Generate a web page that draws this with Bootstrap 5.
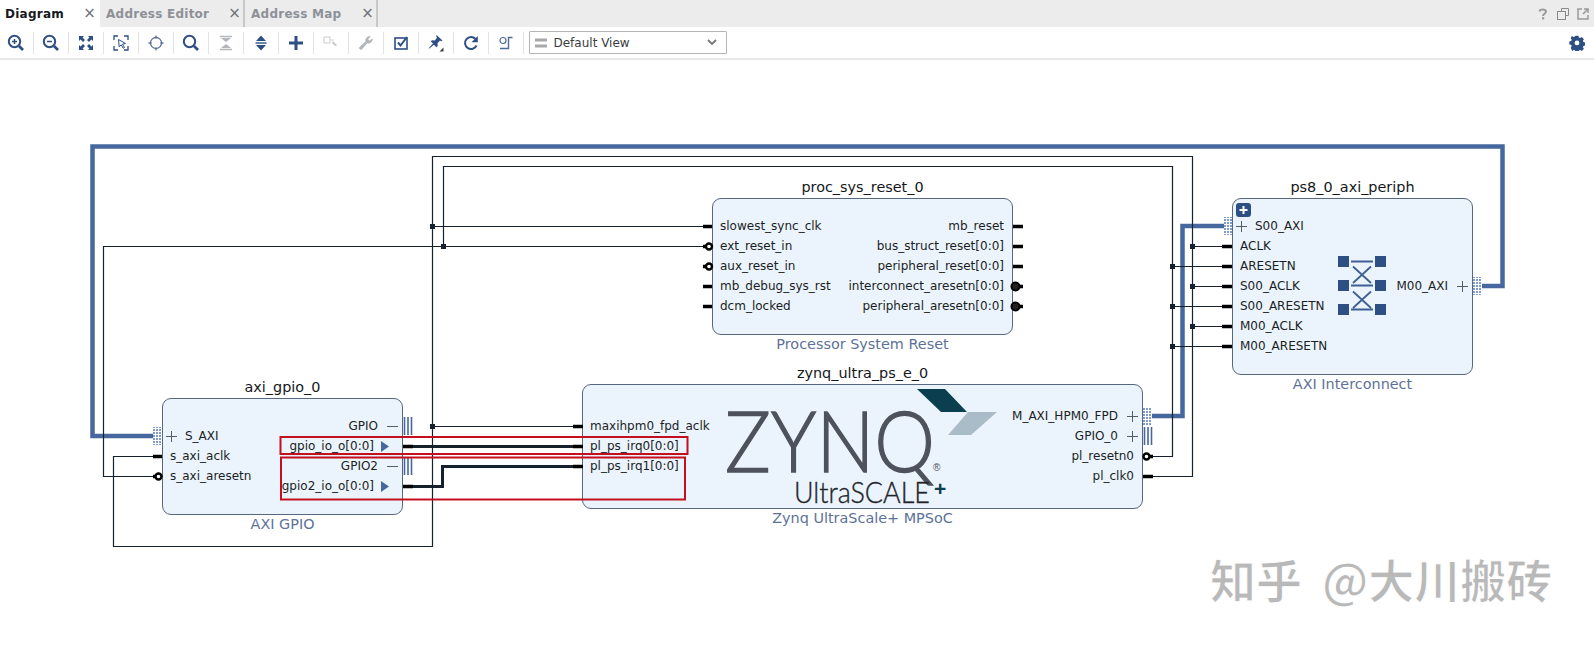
<!DOCTYPE html>
<html lang="en">
<head>
<meta charset="utf-8">
<title>Diagram</title>
<link rel="stylesheet" href="https://cdn.jsdelivr.net/npm/bootstrap@5.3.0/dist/css/bootstrap.min.css">
<style>
html,body{height:100%;overflow:hidden;background:#fff}
body{font-family:"DejaVu Sans",sans-serif;font-size:12px;color:#16181c}
.tabbar{height:27px;background:#ececec;flex-wrap:nowrap}
.tabbar .tab-item{height:27px;display:flex;align-items:center;font-weight:700;font-size:12px;color:#8d9197;letter-spacing:.25px;border-right:2px solid #c8c8c8;padding:0}
.tabbar .tab-item.is-on{background:#fff;color:#17191d;border-right:0;width:100px;padding-left:5px}
.tab-ed{width:145px;padding-left:6px!important}
.tab-map{width:133px;padding-left:6px!important}
.tab-x{margin-left:auto;margin-right:2px;font-weight:400;font-size:15px;color:#6c7076;line-height:1}
.is-on .tab-x{margin-right:4px}
.winbtns{gap:8px;padding-right:5px}
.toolbar{height:33px;background:#fff;border-bottom:2px solid #e9e9e9}
.tb{width:34px;height:24px;padding:0;border:0;border-radius:0;display:flex;align-items:center;justify-content:center;flex:none}
.tb:first-child{margin-left:-1.5px}
.tb-sep{width:1px;height:22px;background:#e2e2e2;flex:none}
.viewsel{width:198px;height:23px;margin-left:5px;border:1px solid #b5b5b5;border-radius:1px;font-size:12px;color:#3a3c41;padding:0 9px 0 5px;background:#fff}
.vs-ico{margin-right:7px}
.canvas{height:587px;position:relative}
.wires{position:absolute;left:0;top:0;z-index:2;pointer-events:none}
.node{position:absolute;z-index:1}
.node-t{height:20px;line-height:20px;margin-bottom:1px;text-align:center;font-size:14.4px;color:#15171a;white-space:nowrap}
.node-s{height:19px;line-height:18px;text-align:center;font-size:14.4px;color:#5d7298;white-space:nowrap}
.node-b{background:#ebf4fd;border:1px solid #56687f;border-radius:9px;white-space:nowrap;font-size:12px;color:#1b1e23}
.pin{height:20px;line-height:20px}
.pin-l{padding-left:7px}
.pin-lb{padding-left:22px}
.pin-r{padding-right:8px;text-align:right}
.pin-rb{padding-right:24px;text-align:right}
.pin-rt{padding-right:28px;text-align:right}
.n-proc{left:712px;top:117px;width:301px}
.n-proc .node-b{height:137px}
.n-gpio{left:162px;top:317px;width:241px}
.n-gpio .node-b{height:117px}
.n-zynq{left:582px;top:303px;width:561px}
.n-zynq .node-b{height:125px}
.n-ps8{left:1232px;top:117px;width:241px}
.n-ps8 .node-b{height:177px}
.col-18{padding-top:17px}
.col-22{padding-top:21px}
.col-28{padding-top:27px}
.col-32{padding-top:31px}
.col-78{padding-top:77px}
.w{fill:none;stroke:#15222e;stroke-width:1.2}
.wt{fill:none;stroke:#15222e;stroke-width:3}
.wb{fill:none;stroke:#47689f;stroke-width:4.5}
.red{fill:none;stroke:#c40f1f;stroke-width:2}
.stub{stroke:#000;stroke-width:3.5}
.inv{fill:#fff;stroke:#000;stroke-width:2.4}
.invf{fill:#222;stroke:#000;stroke-width:2}
.plus{stroke:#555d68;stroke-width:1;fill:none}
.bars{stroke:#47689f;stroke-width:1.6}
.logo1{font-family:"Lato","Liberation Sans",sans-serif;font-weight:300;font-size:84px;fill:#4e525c;stroke:#4e525c;stroke-width:1.3}
.logo2{font-family:"Lato","Liberation Sans",sans-serif;font-weight:300;font-size:29px;fill:#23252a;stroke:#23252a;stroke-width:.35}
.logo3{font-family:"Liberation Sans",sans-serif;font-size:10px;fill:#4e525c}
.logo4{font-family:"Liberation Sans",sans-serif;font-size:21px;font-weight:700;fill:#0b3f50}
.mark-wm{font-family:"Noto Sans CJK SC",sans-serif;font-size:46px;font-weight:700;fill:#b9b9b9;stroke:#fff;stroke-width:1}
.nv{stroke:#2e4f84;fill:none}
.nvf{fill:#2e4f84}
.gr{stroke:#b3b6ba;fill:none}
.grf{fill:#b3b6ba}
</style>
</head>
<body>
<div class="d-flex flex-column vh-100">
  <div class="d-flex tabbar justify-content-between">
    <ul class="nav flex-nowrap">
      <li class="tab-item is-on">Diagram<span class="tab-x">×</span></li>
      <li class="tab-item tab-ed">Address Editor<span class="tab-x">×</span></li>
      <li class="tab-item tab-map">Address Map<span class="tab-x">×</span></li>
    </ul>
    <div class="d-flex align-items-center winbtns">
      <svg width="12" height="12" viewBox="0 0 12 12"><path d="M2.5 3.5C3 1 9 .8 9 3.6c0 2.2-3 2.2-3 4.4" fill="none" stroke="#9a9a9a" stroke-width="2"/><rect x="5" y="9.2" width="2.2" height="2.2" fill="#9a9a9a"/></svg>
      <svg width="12" height="12" viewBox="0 0 12 12" fill="none" stroke="#8a8a8a"><path d="M4.5 3.5v-3h7v7h-3"/><rect x=".5" y="3.5" width="8" height="8"/></svg>
      <svg width="12" height="12" viewBox="0 0 12 12" fill="none" stroke="#9a9a9a" stroke-width="1.5"><path d="M5 1H1v10h10V7"/><path d="M7 1h4v4M11 1 6 6"/></svg>
    </div>
  </div>
  <div class="d-flex align-items-center toolbar">
    <button class="btn tb"><svg width="18" height="18" viewBox="0 0 18 18"><circle class="nv" cx="7.5" cy="7.5" r="5.7" stroke-width="2"/><path class="nv" d="M5 7.5h5M7.5 5v5" stroke-width="1.5"/><path class="nv" d="M12 12l4 4" stroke-width="2.6"/></svg></button><span class="tb-sep"></span>
    <button class="btn tb"><svg width="18" height="18" viewBox="0 0 18 18"><circle class="nv" cx="7.5" cy="7.5" r="5.7" stroke-width="2"/><path class="nv" d="M5 7.5h5" stroke-width="1.5"/><path class="nv" d="M12 12l4 4" stroke-width="2.6"/></svg></button><span class="tb-sep"></span>
    <button class="btn tb"><svg width="16" height="16" viewBox="0 0 16 16"><path class="nvf" d="M1 1h5L4.6 2.6 7 5 5 7 2.6 4.6 1 6zM15 1v5l-1.600-1.400L11 7 9 5l2.400-2.400L10 1zM1 15v-5l1.600 1.400L5 9l2 2-2.400 2.400L6 15zM15 15h-5l1.400-1.600L9 11l2-2 2.400 2.400L15 10z"/></svg></button><span class="tb-sep"></span>
    <button class="btn tb"><svg width="16" height="16" viewBox="0 0 16 16"><path class="nv" d="M1 5V1h4M11 1h4v4M15 11v4h-4M5 15H1v-4" stroke-width="1.3"/><path d="M5.500 4.500l7 4-3 .6 2 3.400-1.300.7-2-3.400-2 2z" fill="#fff" stroke="#2e4f84"/></svg></button><span class="tb-sep"></span>
    <button class="btn tb"><svg width="16" height="16" viewBox="0 0 16 16"><circle cx="8" cy="8" r="5.500" fill="none" stroke="#5b7196" stroke-width="1.300"/><path d="M8 .5v3M8 12.500v3M.5 8h3M12.500 8h3" stroke="#5b7196" stroke-width="1.300"/></svg></button><span class="tb-sep"></span>
    <button class="btn tb"><svg width="18" height="18" viewBox="0 0 18 18"><circle class="nv" cx="7.500" cy="7.500" r="5.700" stroke-width="2"/><path class="nv" d="M12 12l4 4" stroke-width="2.600"/></svg></button><span class="tb-sep"></span>
    <button class="btn tb"><svg width="16" height="16" viewBox="0 0 16 16"><path class="gr" d="M2 1.500h12M2 14.500h12" stroke-width="1.400"/><path class="grf" d="M3 3h10L8 7zM3 13h10L8 9z"/></svg></button><span class="tb-sep"></span>
    <button class="btn tb"><svg width="16" height="16" viewBox="0 0 16 16"><path class="nvf" d="M8 .5 13 6H3zM8 15.500 3 10h10z"/><path class="nv" d="M2.500 8h11" stroke-width="1.400"/></svg></button><span class="tb-sep"></span>
    <button class="btn tb"><svg width="16" height="16" viewBox="0 0 16 16"><path class="nv" d="M8 1v14M1 8h14" stroke-width="3"/></svg></button><span class="tb-sep"></span>
    <button class="btn tb"><svg width="16" height="16" viewBox="0 0 16 16"><rect x="1" y="2" width="6" height="6" fill="#fff" stroke="#c9cbce"/><path d="M8 5h3M10 6.500l3.500 3.500-1 1L9.500 8z" fill="#c4c6c9" stroke="#c4c6c9" stroke-width=".7"/></svg></button><span class="tb-sep"></span>
    <button class="btn tb"><svg width="16" height="16" viewBox="0 0 16 16"><path d="M2 14c-.8-.8-.6-1.400 0-2l6-5.500C7.200 4 8.800 1.500 12 1.500l-2.200 2.700 1.800 1.800L14.300 4c0 3-2.700 4.800-5.200 3.900L3.800 14c-.6.600-1.200.6-1.800 0z" fill="#b3b6ba" stroke="#b3b6ba" stroke-width=".9"/></svg></button><span class="tb-sep"></span>
    <button class="btn tb"><svg width="16" height="16" viewBox="0 0 16 16"><rect x="2" y="3" width="12" height="11" fill="none" stroke="#2e4f84" stroke-width="1.600"/><path class="nv" d="M5 7.500l2.500 3L14 2" stroke-width="2"/></svg></button><span class="tb-sep"></span>
    <button class="btn tb"><svg width="18" height="18" viewBox="0 0 18 18"><path class="nvf" d="M9.500 1l6 5.500-1.500.7-1-.6-2.500 2.700.2 2.800-1.300 1.100-2.500-2.500L3 14l-1.500 1 1-1.700L6 9.500 3.800 7.300l1.200-1.100 2.800.2L10 3.800l-.8-1.200z"/><path d="M12.500 17.500l4-4v4z" fill="#3b3f46"/></svg></button><span class="tb-sep"></span>
    <button class="btn tb"><svg width="16" height="16" viewBox="0 0 16 16"><path class="nv" d="M13.500 10.500A6 6 0 1 1 12.500 4" stroke-width="2"/><path class="nvf" d="M14.800.9v6.300H8.500z"/></svg></button><span class="tb-sep"></span>
    <button class="btn tb"><svg width="16" height="16" viewBox="0 0 16 16"><circle cx="5" cy="5.500" r="3" fill="none" stroke="#4f6c99" stroke-width="1.200"/><path d="M14.500 2.500H10.500V13.500H2" fill="none" stroke="#4f6c99" stroke-width="1.400"/></svg></button><span class="tb-sep"></span>
    <div class="d-flex align-items-center viewsel">
      <svg class="vs-ico" width="12" height="10" viewBox="0 0 12 10"><path d="M0 2h12M0 8h12" stroke="#a8a8a8" stroke-width="3"/></svg>
      <span>Default View</span>
      <svg class="ms-auto" width="10" height="7" viewBox="0 0 10 7"><path d="M1 1l4 4 4-4" fill="none" stroke="#777" stroke-width="1.800"/></svg>
    </div>
    <button class="btn tb ms-auto me-0"><svg width="16" height="16" viewBox="0 0 16 16"><path class="nvf" fill-rule="evenodd" d="M6.500 1h3l.4 1.800 1.300.6 1.600-1 2.100 2.100-1 1.600.6 1.300 1.800.4v3l-1.800.4-.6 1.300 1 1.600-2.100 2.100-1.600-1-1.300.6-.4 1.800h-3l-.4-1.800-1.300-.6-1.600 1L1.700 13l1-1.600-.6-1.300L.3 9.700v-3l1.800-.4.600-1.300-1-1.600L2.900 1.300l1.600 1 1.300-.6zM8 5.800a2.400 2.400 0 1 0 0 4.800 2.400 2.400 0 0 0 0-4.800z" transform="translate(0 -.3)"/></svg></button>
  </div>
  <main class="canvas">
    <div class="node n-proc">
      <div class="node-t">proc_sys_reset_0</div>
      <div class="node-b d-flex justify-content-between">
        <div class="col-18">
          <div class="pin pin-l">slowest_sync_clk</div><div class="pin pin-l">ext_reset_in</div><div class="pin pin-l">aux_reset_in</div><div class="pin pin-l">mb_debug_sys_rst</div><div class="pin pin-l">dcm_locked</div>
        </div>
        <div class="col-18">
          <div class="pin pin-r">mb_reset</div><div class="pin pin-r">bus_struct_reset[0:0]</div><div class="pin pin-r">peripheral_reset[0:0]</div><div class="pin pin-r">interconnect_aresetn[0:0]</div><div class="pin pin-r">peripheral_aresetn[0:0]</div>
        </div>
      </div>
      <div class="node-s">Processor System Reset</div>
    </div>
    <div class="node n-gpio">
      <div class="node-t">axi_gpio_0</div>
      <div class="node-b d-flex justify-content-between">
        <div class="col-28">
          <div class="pin pin-lb">S_AXI</div><div class="pin pin-l">s_axi_aclk</div><div class="pin pin-l">s_axi_aresetn</div>
        </div>
        <div class="col-18">
          <div class="pin pin-rb">GPIO</div><div class="pin pin-rt">gpio_io_o[0:0]</div><div class="pin pin-rb">GPIO2</div><div class="pin pin-rt">gpio2_io_o[0:0]</div>
        </div>
      </div>
      <div class="node-s">AXI GPIO</div>
    </div>
    <div class="node n-zynq">
      <div class="node-t">zynq_ultra_ps_e_0</div>
      <div class="node-b d-flex justify-content-between">
        <div class="col-32">
          <div class="pin pin-l">maxihpm0_fpd_aclk</div><div class="pin pin-l">pl_ps_irq0[0:0]</div><div class="pin pin-l">pl_ps_irq1[0:0]</div>
        </div>
        <div class="col-22">
          <div class="pin pin-rb">M_AXI_HPM0_FPD</div><div class="pin pin-rb">GPIO_0</div><div class="pin pin-r">pl_resetn0</div><div class="pin pin-r">pl_clk0</div>
        </div>
      </div>
      <div class="node-s">Zynq UltraScale+ MPSoC</div>
    </div>
    <div class="node n-ps8">
      <div class="node-t">ps8_0_axi_periph</div>
      <div class="node-b d-flex justify-content-between">
        <div class="col-18">
          <div class="pin pin-lb">S00_AXI</div><div class="pin pin-l">ACLK</div><div class="pin pin-l">ARESETN</div><div class="pin pin-l">S00_ACLK</div><div class="pin pin-l">S00_ARESETN</div><div class="pin pin-l">M00_ACLK</div><div class="pin pin-l">M00_ARESETN</div>
        </div>
        <div class="col-78">
          <div class="pin pin-rb">M00_AXI</div>
        </div>
      </div>
      <div class="node-s">AXI Interconnect</div>
    </div>

    <svg class="wires" width="1594" height="587" viewBox="0 60 1594 587">
      <defs>
        <pattern id="dots" width="3" height="3" patternUnits="userSpaceOnUse"><rect width="2" height="2" fill="#7f9bc6"/></pattern>
      </defs>
      <!-- thick interface nets -->
      <path class="wb" d="M1482 286H1502.500V146.500H92.500V436H153"/>
      <path class="wb" d="M1152 416H1182.500V226H1224"/>
      <!-- thin nets -->
      <path class="w" d="M1153 476.500H1192.500V156.500H432.500V546.500H113.500V456.500H153"/>
      <path class="w" d="M1153 456.500H1172.500V166.500H443.500V246.500"/>
      <path class="w" d="M703 246.500H103.500V476.500H153"/>
      <path class="w" d="M432.500 226.500H703M432.500 426.500H573"/>
      <path class="w" d="M1192.500 246.500H1222M1192.500 286.500H1222M1192.500 326.500H1222M1172.500 266.500H1222M1172.500 306.500H1222M1172.500 346.500H1222"/>
      <g fill="#15222e">
        <rect x="430" y="224" width="5" height="5"/><rect x="430" y="424" width="5" height="5"/><rect x="441" y="244" width="5" height="5"/>
        <rect x="1190" y="244" width="5" height="5"/><rect x="1190" y="284" width="5" height="5"/><rect x="1190" y="324" width="5" height="5"/>
        <rect x="1170" y="264" width="5" height="5"/><rect x="1170" y="304" width="5" height="5"/><rect x="1170" y="344" width="5" height="5"/>
      </g>
      <path class="wt" d="M403 446.500H573"/>
      <path class="wt" d="M403 486.500H442.500V466.500H573"/>
      <!-- pin stubs -->
      <path class="stub" d="M153 456.500H162M153 476.500H158M403 446.500H413M403 486.500H413M703 226.500H712M703 246.500H708M703 266.500H708M703 286.500H712M703 306.500H712M1013 226.500H1023M1013 246.500H1023M1013 266.500H1023M1015 286.500H1023M1015 306.500H1023M573 426.500H583M573 446.500H583M573 466.500H583M1148 456.500H1153M1143 476.500H1153M1222 246.500H1232M1222 266.500H1232M1222 286.500H1232M1222 306.500H1232M1222 326.500H1232M1222 346.500H1232"/>
      <circle class="inv" cx="158.500" cy="476.500" r="3"/><circle class="inv" cx="709" cy="246.500" r="3"/><circle class="inv" cx="709" cy="266.500" r="3"/><circle class="inv" cx="1146.500" cy="456.500" r="3"/>
      <circle class="invf" cx="1015.500" cy="286.500" r="4"/><circle class="invf" cx="1015.500" cy="306.500" r="4"/>
      <!-- bus connectors -->
      <rect x="153" y="427" width="9" height="18" fill="url(#dots)"/>
      <rect x="1143" y="407" width="9" height="18" fill="url(#dots)"/>
      <rect x="1224" y="217" width="8" height="18" fill="url(#dots)"/>
      <rect x="1473" y="277" width="9" height="18" fill="url(#dots)"/>
      <path class="bars" d="M404.500 417V435M408 417V435M411.500 417V435M404.500 457V475M408 457V475M411.500 457V475M1144.500 427V445M1148 427V445M1151.500 427V445"/>
      <path class="plus" d="M166 436.500h11M171.500 431v11M1127 416.500h11M1132.500 411v11M1127 436.500h11M1132.500 431v11M1236 226.500h11M1241.500 221v11M1457 286.500h11M1462.500 281v11M387 426.500h11M387 466.500h11"/>
      <path d="M381 441v11l8-5.500zM381 481v11l8-5.500z" fill="#47689f"/>
      <!-- red highlight boxes -->
      <rect class="red" x="280.500" y="437" width="407" height="17"/>
      <rect class="red" x="281" y="457.500" width="404" height="42"/>
      <!-- ps8 expand button and crossbar -->
      <rect x="1236" y="203" width="15" height="14" rx="3" fill="#2e4f84"/>
      <path d="M1243.500 206v8M1239.500 210h8" stroke="#fff" stroke-width="2"/>
      <g fill="#2e4f84">
        <rect x="1338" y="256" width="11" height="11"/><rect x="1375" y="256" width="11" height="11"/>
        <rect x="1338" y="280" width="11" height="11"/><rect x="1375" y="280" width="11" height="11"/>
        <rect x="1338" y="304" width="11" height="11"/><rect x="1375" y="304" width="11" height="11"/>
      </g>
      <path d="M1351 261.500h22M1351 285.500h22M1351 309.500h22M1353 266.500l18 16.500M1371 266.500l-18 16.500M1353 308l18-16.500M1371 308l-18-16.500" stroke="#3f5f94" stroke-width="1.800" fill="none"/>
      <!-- zynq logo -->
      <polygon points="917,389 945,389 967,412 941,412" fill="#0b3f50"/>
      <polygon points="968,412 997,412 971,435 948,435" fill="#a9bcc8"/>
      <text class="logo1" x="725" y="471.500" textLength="210" lengthAdjust="spacingAndGlyphs">ZYNQ</text>
      <text class="logo3" x="933" y="471">®</text>
      <text class="logo2" x="794" y="502.500" textLength="136" lengthAdjust="spacingAndGlyphs">UltraSCALE</text>
      <text class="logo4" x="934" y="496">+</text>
      <text class="mark-wm" x="1210" y="598">知乎<tspan dx="20">@</tspan>大川搬砖</text>
    </svg>
  </main>
</div>
<script src="https://cdn.jsdelivr.net/npm/bootstrap@5.3.0/dist/js/bootstrap.bundle.min.js"></script>
</body>
</html>
